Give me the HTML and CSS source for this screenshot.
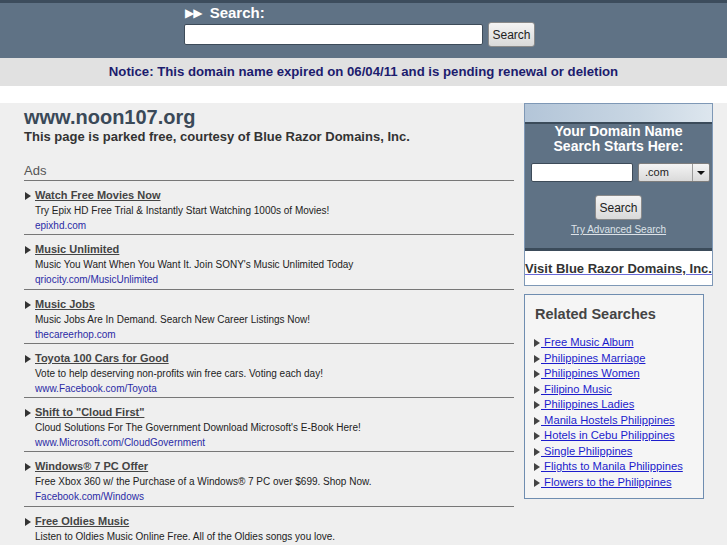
FILE: index.html
```html
<!DOCTYPE html>
<html lang="en">
<head>
  <meta charset="UTF-8">
  <title>www.noon107.org</title>
  <link rel="stylesheet" href="styles.css">
</head>
<body>

  <div class="topbar">
    <form class="top-search">
      <div class="top-label"><span class="arrows">&#9654;&#9654;</span> Search:</div>
      <div class="top-row">
        <input type="text" class="top-input">
        <button type="button" class="btn top-btn">Search</button>
      </div>
    </form>
  </div>

  <div class="notice">Notice: This domain name expired on 06/04/11 and is pending renewal or deletion</div>

  <div class="main">
    <div class="left">
      <h1 class="site-title">www.noon107.org</h1>
      <p class="courtesy">This page is parked free, courtesy of Blue Razor Domains, Inc.</p>

      <div class="ads-head">Ads</div>

      <div class="ad">
        <a class="ad-title" href="#">Watch Free Movies Now</a>
        <div class="ad-desc">Try Epix HD Free Trial &amp; Instantly Start Watching 1000s of Movies!</div>
        <div class="ad-url">epixhd.com</div>
      </div>
      <div class="ad">
        <a class="ad-title" href="#">Music Unlimited</a>
        <div class="ad-desc">Music You Want When You Want It. Join SONY's Music Unlimited Today</div>
        <div class="ad-url">qriocity.com/MusicUnlimited</div>
      </div>
      <div class="ad">
        <a class="ad-title" href="#">Music Jobs</a>
        <div class="ad-desc">Music Jobs Are In Demand. Search New Career Listings Now!</div>
        <div class="ad-url">thecareerhop.com</div>
      </div>
      <div class="ad">
        <a class="ad-title" href="#">Toyota 100 Cars for Good</a>
        <div class="ad-desc">Vote to help deserving non-profits win free cars. Voting each day!</div>
        <div class="ad-url">www.Facebook.com/Toyota</div>
      </div>
      <div class="ad">
        <a class="ad-title" href="#">Shift to "Cloud First"</a>
        <div class="ad-desc">Cloud Solutions For The Government Download Microsoft's E-Book Here!</div>
        <div class="ad-url">www.Microsoft.com/CloudGovernment</div>
      </div>
      <div class="ad">
        <a class="ad-title" href="#">Windows&reg; 7 PC Offer</a>
        <div class="ad-desc">Free Xbox 360 w/ the Purchase of a Windows&reg; 7 PC over $699. Shop Now.</div>
        <div class="ad-url">Facebook.com/Windows</div>
      </div>
      <div class="ad">
        <a class="ad-title" href="#">Free Oldies Music</a>
        <div class="ad-desc">Listen to Oldies Music Online Free. All of the Oldies songs you love.</div>
      </div>
    </div>

    <div class="right">
      <div class="domain-box">
        <div class="domain-strip"></div>
        <div class="domain-search">
          <div class="domain-title">Your Domain Name<br>Search Starts Here:</div>
          <div class="domain-row">
            <input type="text" class="domain-input">
            <div class="domain-select">
              <span class="select-text">.com</span>
              <span class="select-arrow"></span>
            </div>
          </div>
          <button type="button" class="btn domain-btn">Search</button>
          <a class="advanced" href="#">Try Advanced Search</a>
        </div>
        <div class="visit">
          <a href="#">Visit Blue Razor Domains, Inc.</a>
        </div>
      </div>

      <div class="related">
        <h3>Related Searches</h3>
        <ul>
          <li><a href="#">&nbsp;Free Music Album</a></li>
          <li><a href="#">&nbsp;Philippines Marriage</a></li>
          <li><a href="#">&nbsp;Philippines Women</a></li>
          <li><a href="#">&nbsp;Filipino Music</a></li>
          <li><a href="#">&nbsp;Philippines Ladies</a></li>
          <li><a href="#">&nbsp;Manila Hostels Philippines</a></li>
          <li><a href="#">&nbsp;Hotels in Cebu Philippines</a></li>
          <li><a href="#">&nbsp;Single Philippines</a></li>
          <li><a href="#">&nbsp;Flights to Manila Philippines</a></li>
          <li><a href="#">&nbsp;Flowers to the Philippines</a></li>
        </ul>
      </div>
    </div>
  </div>

</body>
</html>
```

FILE: styles.css
```css
body {
  margin: 0;
  font-family: "Liberation Sans", Arial, sans-serif;
  background-color: #fff;
  overflow: hidden;
}

.topbar {
  background-color: #5f7285;
  border-top: 3px solid #3c4c5c;
  height: 58px;
  box-sizing: border-box;
  padding: 2px 0 0 184px;
}

.top-label {
  color: #fff;
  font-size: 15px;
  font-weight: bold;
  line-height: 15px;
  padding-left: 1px;
}

.top-label .arrows {
  font-family: "DejaVu Sans", sans-serif;
  font-size: 12px;
  letter-spacing: -1px;
  margin-right: 4px;
  vertical-align: 1px;
}

.top-row {
  display: flex;
  align-items: center;
  gap: 5px;
  height: 25px;
  margin-top: 1px;
}

.top-input {
  width: 299px;
  height: 21px;
  box-sizing: border-box;
  border: 1px solid #3d4b59;
  border-radius: 2px;
  background: #fff;
  margin: 0;
}

.btn {
  font-family: "Liberation Sans", Arial, sans-serif;
  font-size: 12px;
  color: #222;
  background: linear-gradient(#f4f4f4, #d9d9d9);
  border: 1px solid #8a8a8a;
  border-radius: 3px;
  padding: 0;
  margin: 0;
}

.top-btn {
  width: 47px;
  height: 25px;
}

.notice {
  background-color: #e1e1e1;
  color: #1c1c6e;
  font-size: 13.2px;
  font-weight: bold;
  text-align: center;
  line-height: 28px;
  height: 28px;
}

.main {
  margin-top: 17px;
  background-color: #efefef;
  display: flex;
  gap: 10px;
  padding-left: 24px;
  height: 450px;
}

.left {
  width: 490px;
}

.site-title {
  margin: 4px 0 0;
  font-size: 20px;
  line-height: 21px;
  color: #3a4958;
}

.courtesy {
  margin: 0;
  font-size: 13px;
  font-weight: bold;
  line-height: 18px;
  color: #333;
}

.ads-head {
  margin-top: 17px;
  font-size: 13px;
  line-height: 16px;
  padding-bottom: 1px;
  color: #555;
  border-bottom: 1px solid #777;
}

.ad {
  padding: 7px 0 1.3px 11px;
  border-bottom: 1px solid #777;
  position: relative;
  font-size: 11px;
  line-height: 15px;
}

.ad::before {
  content: "";
  position: absolute;
  left: 1px;
  top: 11px;
  border-left: 6px solid #333;
  border-top: 4px solid transparent;
  border-bottom: 4px solid transparent;
}

.ad-title {
  font-size: 11px;
  font-weight: bold;
  color: #444;
}

.ad-desc {
  font-size: 10px;
  color: #222;
}

.ad-url {
  font-size: 10px;
  color: #2b2ba6;
}

.right {
  width: 189px;
}

.domain-box {
  border: 1px solid #7e98b6;
  background: #fff;
}

.domain-strip {
  height: 18px;
  background: linear-gradient(90deg, #b3c5d8, #c8d6e3 60%, #dde6ee);
  border-bottom: 2px solid #3b4b5a;
}

.domain-search {
  background-color: #5f7285;
  border-bottom: 3px solid #3b4b5a;
  padding-bottom: 12px;
  text-align: center;
  font-size: 10px;
  line-height: 12px;
}

.domain-title {
  color: #fff;
  font-size: 14px;
  font-weight: bold;
  line-height: 15px;
}

.domain-row {
  display: flex;
  gap: 5px;
  padding: 9px 0 0 6px;
}

.domain-input {
  width: 102px;
  height: 19px;
  box-sizing: border-box;
  border: 1px solid #3d4b59;
  border-radius: 2px;
  margin: 0;
}

.domain-select {
  width: 72px;
  height: 19px;
  box-sizing: border-box;
  border: 1px solid #7d7d7d;
  border-radius: 2px;
  background: linear-gradient(#f4f4f4, #dadada);
  display: flex;
  font-size: 11px;
  color: #222;
  line-height: 17px;
}

.select-text {
  flex: 1;
  text-align: left;
  padding-left: 6px;
}

.select-arrow {
  width: 16px;
  border-left: 1px solid #9a9a9a;
  position: relative;
}

.select-arrow::after {
  content: "";
  position: absolute;
  left: 4px;
  top: 7px;
  border-top: 4px solid #111;
  border-left: 4px solid transparent;
  border-right: 4px solid transparent;
}

.domain-btn {
  display: block;
  margin: 13px auto 0;
  width: 47px;
  height: 25px;
  font-size: 12px;
}

.advanced {
  display: inline-block;
  margin-top: 4px;
  font-size: 10px;
  line-height: 12px;
  color: #dde2e8;
}

.visit {
  padding: 8px 0 7px;
  line-height: 18px;
  text-align: center;
}

.visit a {
  font-size: 13px;
  font-weight: bold;
  color: #333;
  text-decoration-color: #6a6ad8;
}

.related {
  margin-top: 8px;
  width: 180px;
  box-sizing: border-box;
  border: 1px solid #6f8db0;
  background-color: #f5f5f5;
  padding: 10px 0 8px 9px;
}

.related h3 {
  margin: 0 0 0 1px;
  font-size: 14.5px;
  line-height: 18px;
  color: #444;
}

.related ul {
  list-style: none;
  margin: 12px 0 0;
  padding: 0;
}

.related li {
  line-height: 15.5px;
  font-size: 11.2px;
  position: relative;
  padding-left: 7px;
}

.related li::before {
  content: "";
  position: absolute;
  left: 0;
  top: 4px;
  border-left: 6px solid #444;
  border-top: 4px solid transparent;
  border-bottom: 4px solid transparent;
}

.related a {
  color: #1c1ccc;
}
```
